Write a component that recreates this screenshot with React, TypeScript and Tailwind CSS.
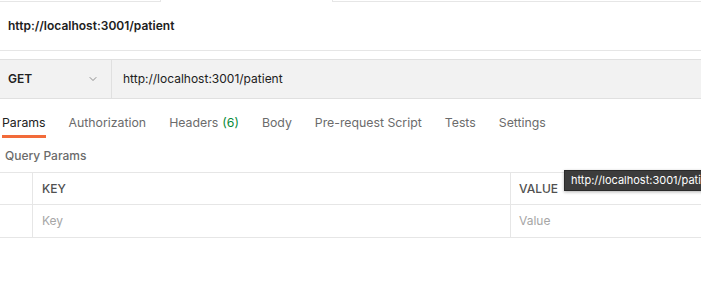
import React from 'react';
import { ChevronDown } from 'lucide-react';

const tabs = [
  { label: 'Params', active: true },
  { label: 'Authorization' },
  { label: 'Headers', count: '(6)' },
  { label: 'Body' },
  { label: 'Pre-request Script' },
  { label: 'Tests' },
  { label: 'Settings' },
];

export default function App() {
  return (
    <div className="relative h-[295px] w-[701px] overflow-hidden bg-white text-[12px] text-[#212121]" style={{ fontFamily: 'Inter, "Noto Sans", sans-serif' }}>
      {/* request tab strip */}
      <div className="flex h-[2px]">
        <div className="w-[161px] border-b border-r border-[#e6e6e6]" />
        <div className="w-[171px]" />
        <div className="flex-1 border-b border-l border-[#e6e6e6]" />
      </div>

      <div className="flex h-[49px] items-center border-b border-[#e6e6e6] px-2 pb-[1px]">
        <span className="font-semibold">http://localhost:3001/patient</span>
      </div>

      <div className="h-[8px]" />

      {/* url bar */}
      <div className="flex h-[40px] border-y border-[#e0e0e0] bg-[#f2f2f2]">
        <div className="flex w-[112px] items-center justify-between border-r border-[#e0e0e0] pl-2 pr-3">
          <span className="font-semibold">GET</span>
          <ChevronDown className="h-3 w-3 text-[#6b6b6b]" strokeWidth={1.5} />
        </div>
        <div className="flex items-center pl-[11px]">http://localhost:3001/patient</div>
      </div>

      {/* tabs */}
      <div className="mt-[15px] flex h-[24px] gap-[23px] pl-[2px] text-[12.3px]">
        {tabs.map((t) => (
          <div
            key={t.label}
            className={`flex items-start border-b-[3px] ${t.active ? 'border-[#f26b3a] text-[#212121]' : 'border-transparent text-[#6b6b6b]'}`}
          >
            <span>{t.label}</span>
            {t.count && <span className="ml-1 text-[#0a8a3a]">{t.count}</span>}
          </div>
        ))}
      </div>

      <div className="flex h-[34px] items-center px-[5px] pt-[2px] text-[12px] font-medium text-[#6b6b6b]">Query Params</div>

      {/* params table */}
      <div className="border-y border-[#e6e6e6] text-[12px]">
        <div className="flex h-[32px] border-b border-[#e6e6e6]">
          <div className="w-[33px] border-r border-[#e6e6e6]" />
          <div className="flex w-[478px] items-center border-r border-[#e6e6e6] pl-[9px] font-medium text-[#505050]">KEY</div>
          <div className="flex flex-1 items-center pl-2 font-medium text-[#505050]">VALUE</div>
        </div>
        <div className="flex h-[32px]">
          <div className="w-[33px] border-r border-[#e6e6e6]" />
          <div className="flex w-[478px] items-center border-r border-[#e6e6e6] pl-[9px] text-[#a6a6a6]">Key</div>
          <div className="flex flex-1 items-center pl-2 text-[#a6a6a6]">Value</div>
        </div>
      </div>

      {/* tooltip */}
      <div className="absolute left-[564px] top-[170px] whitespace-nowrap border border-[#2a2a2a] bg-[#3c3c3c] px-[6px] py-[1px] text-[11px] text-white shadow-[0_1px_3px_rgba(0,0,0,0.3)]">
        http://localhost:3001/patient
      </div>
    </div>
  );
}
